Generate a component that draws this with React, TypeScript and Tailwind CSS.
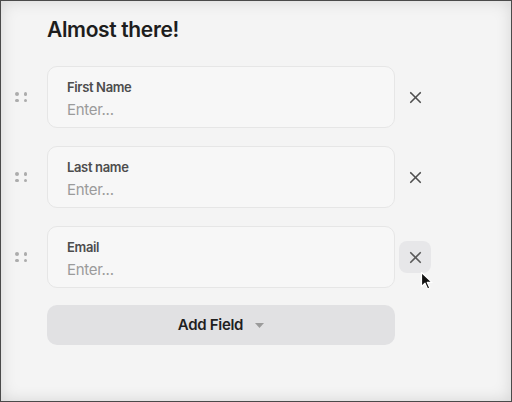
import { X } from "lucide-react";

const fields = ["First Name", "Last name", "Email"];

const DragHandle = () => (
  <div className="w-[32px] shrink-0 flex items-center">
    <div className="grid grid-cols-2 gap-x-[5px] gap-y-[3px]">
      <span className="w-[3.5px] h-[3.5px] rounded-full bg-[#acacac]" />
      <span className="w-[3.5px] h-[3.5px] rounded-full bg-[#acacac]" />
      <span className="w-[3.5px] h-[3.5px] rounded-full bg-[#acacac]" />
      <span className="w-[3.5px] h-[3.5px] rounded-full bg-[#acacac]" />
    </div>
  </div>
);

const Cursor = () => (
  <svg
    className="absolute left-[419px] top-[270px]"
    width="14"
    height="20"
    viewBox="0 0 14 20"
  >
    <path
      d="M1.5 1.5 L1.5 15.5 L5 12.2 L7.6 18 L9.8 17 L7.3 11.4 L12 11.4 Z"
      fill="#111"
      stroke="#fff"
      strokeWidth="1.2"
      strokeLinejoin="round"
    />
  </svg>
);

const FieldRow = ({ label, hovered }: { label: string; hovered?: boolean }) => (
  <div className="flex items-center">
    <DragHandle />
    <div className="w-[348px] h-[62px] flex flex-col rounded-[10px] border border-[#e6e6e6] bg-[#f7f7f7] pl-[19px] pt-[12px]">
      <label className="text-[13px] leading-[16px] font-semibold tracking-[-0.35px] text-[#4d4d4d]">
        {label}
      </label>
      <input
        placeholder="Enter..."
        className="mt-[2px] h-[24px] bg-transparent text-[15px] tracking-[-0.3px] outline-none placeholder:text-[#9b9b9b]"
      />
    </div>
    <button
      className={
        hovered
          ? "ml-[4px] w-[32px] h-[32px] rounded-[8px] bg-[#e7e7e9] flex items-center justify-center text-[#5a5a5a]"
          : "ml-[4px] w-[32px] h-[32px] rounded-[8px] flex items-center justify-center text-[#4f4f4f]"
      }
    >
      <X size={19} strokeWidth={2.1} />
    </button>
  </div>
);

export default function App() {
  return (
    <div className="relative w-[512px] h-[402px] overflow-hidden border border-[#4a4a4a] bg-[#f4f4f4] shadow-[inset_0_0_16px_rgba(0,0,0,0.13)] font-['Inter',sans-serif]">
      <div className="pl-[14px] pt-[15px]">
        <h1 className="pl-[32px] text-[21px] leading-[28px] font-semibold tracking-[-0.35px] text-[#1d1d1d]">
          Almost there!
        </h1>
        <div className="mt-[22px] flex flex-col gap-[18px]">
          <FieldRow label={fields[0]} />
          <FieldRow label={fields[1]} />
          <FieldRow label={fields[2]} hovered />
        </div>
        <div className="pl-[32px] mt-[17px]">
          <button className="w-[348px] h-[40px] rounded-[10px] bg-[#e1e1e3] flex items-center justify-center">
            <span className="text-[15px] font-semibold tracking-[-0.3px] text-[#1f1f1f]">Add Field</span>
            <svg className="ml-[12px]" width="9" height="5" viewBox="0 0 9 5">
              <path d="M0 0 L9 0 L4.5 5 Z" fill="#9b9b9b" />
            </svg>
          </button>
        </div>
      </div>
      <Cursor />
    </div>
  );
}
